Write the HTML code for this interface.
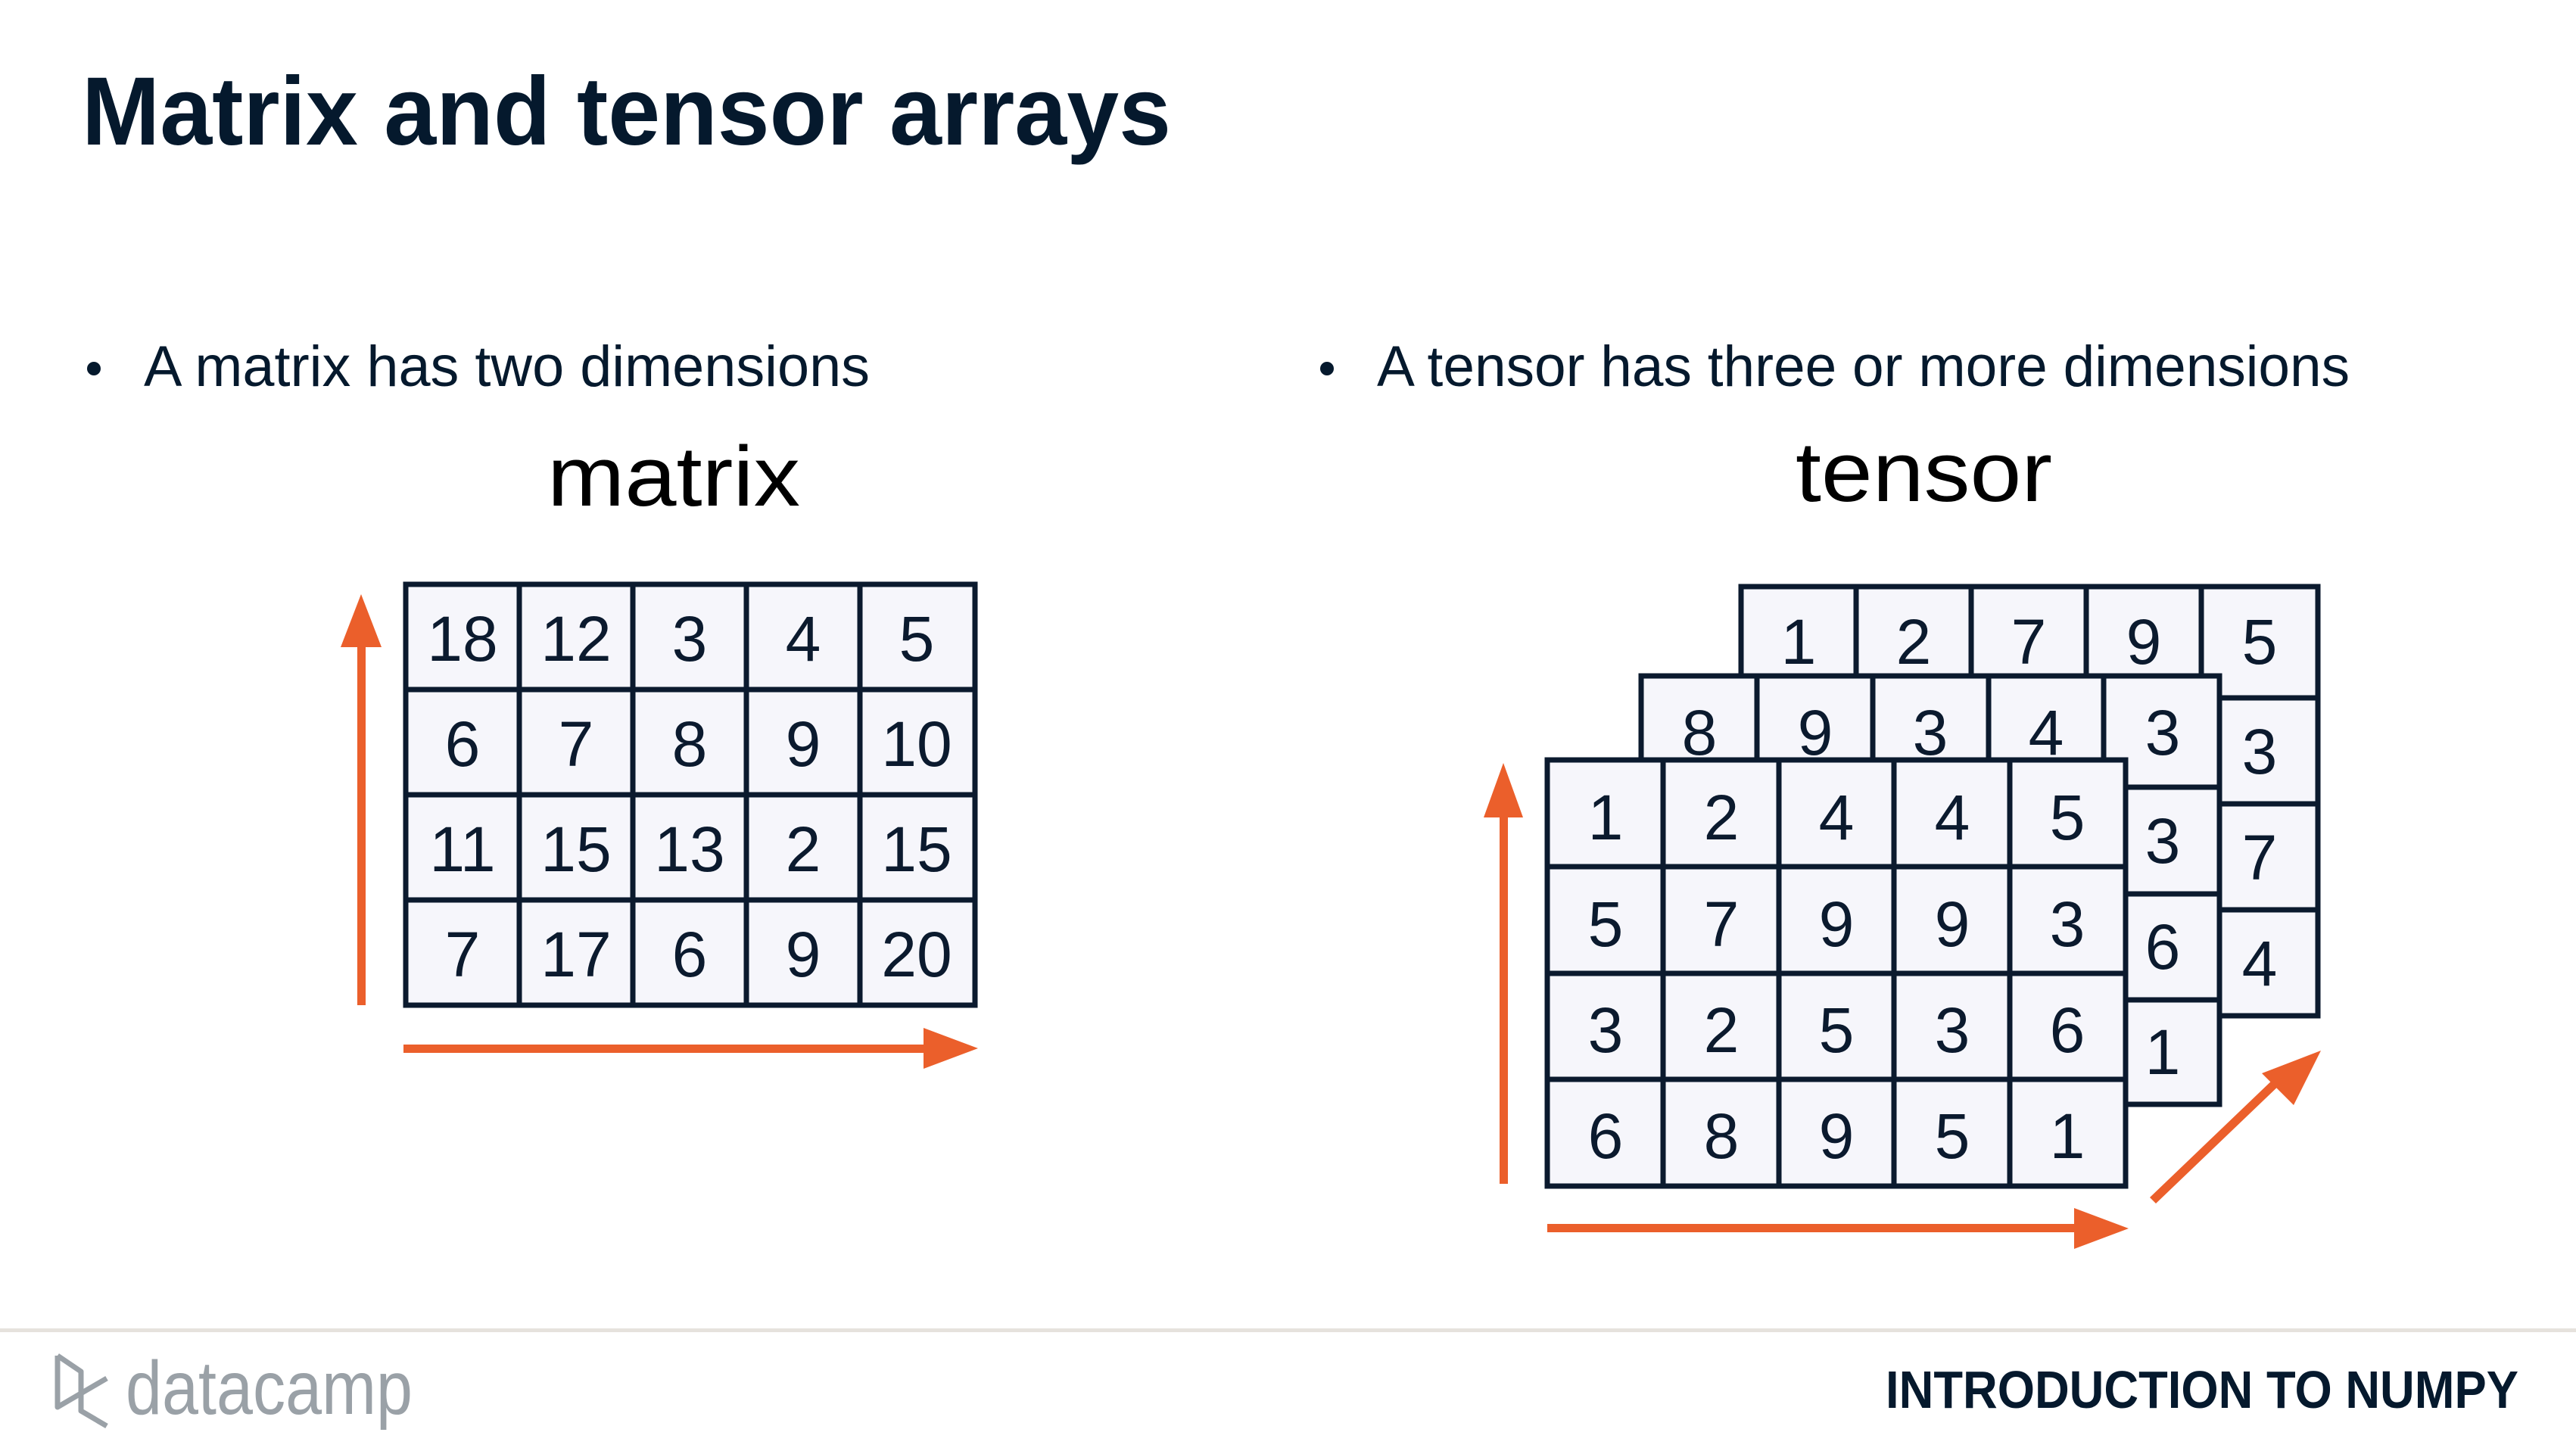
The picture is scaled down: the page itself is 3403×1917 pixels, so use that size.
<!DOCTYPE html>
<html><head><meta charset="utf-8"><style>
html,body{margin:0;padding:0;background:#fff;}
svg{display:block;}
</style></head><body>
<svg width="3403" height="1917" viewBox="0 0 3403 1917" xmlns="http://www.w3.org/2000/svg" font-family="'Liberation Sans', sans-serif">
<rect width="3403" height="1917" fill="#fff"/>
<text x="108" y="191" font-size="128" font-weight="bold" fill="#05192d" textLength="1439" lengthAdjust="spacingAndGlyphs">Matrix and tensor arrays</text>
<circle cx="124" cy="487" r="9" fill="#05192d"/>
<text x="190" y="510" font-size="76" fill="#05192d" textLength="959" lengthAdjust="spacingAndGlyphs">A matrix has two dimensions</text>
<circle cx="1753" cy="487" r="9" fill="#05192d"/>
<text x="1819" y="510" font-size="76" fill="#05192d" textLength="1285" lengthAdjust="spacingAndGlyphs">A tensor has three or more dimensions</text>
<text x="723" y="668" font-size="112" fill="#000" textLength="334" lengthAdjust="spacingAndGlyphs">matrix</text>
<text x="2372" y="662" font-size="112" fill="#000" textLength="339" lengthAdjust="spacingAndGlyphs">tensor</text>

<g fill="#f6f6fb" stroke="#0b1a2e" stroke-width="7">
<!-- matrix -->
<rect x="536" y="772" width="752" height="556"/>
<path d="M686 772V1328M836 772V1328M986 772V1328M1136 772V1328M536 911H1288M536 1050H1288M536 1189H1288" fill="none"/>
<!-- tensor back -->
<rect x="2300" y="775" width="762" height="567"/>
<path d="M2452 775V920M2604 775V920M2756 775V920M2908 775V920M2908 922H3062M2932 1062H3062M2932 1202H3062" fill="none"/>
<!-- middle -->
<rect x="2168" y="893" width="764" height="566"/>
<path d="M2321 893V1004M2474 893V1004M2627 893V1004M2779 893V1004M2808 1040H2932M2808 1181H2932M2808 1321H2932" fill="none"/>
<!-- front -->
<rect x="2044" y="1004" width="764" height="563"/>
<path d="M2197 1004V1567M2350 1004V1567M2502 1004V1567M2655 1004V1567M2044 1145H2808M2044 1286H2808M2044 1426H2808" fill="none"/>
</g>

<g font-size="84" fill="#0b1a2e" text-anchor="middle">
<text x="611" y="873">18</text><text x="761" y="873">12</text><text x="911" y="873">3</text><text x="1061" y="873">4</text><text x="1211" y="873">5</text>
<text x="611" y="1012">6</text><text x="761" y="1012">7</text><text x="911" y="1012">8</text><text x="1061" y="1012">9</text><text x="1211" y="1012">10</text>
<text x="611" y="1151">11</text><text x="761" y="1151">15</text><text x="911" y="1151">13</text><text x="1061" y="1151">2</text><text x="1211" y="1151">15</text>
<text x="611" y="1290">7</text><text x="761" y="1290">17</text><text x="911" y="1290">6</text><text x="1061" y="1290">9</text><text x="1211" y="1290">20</text>
<text x="2376" y="877">1</text><text x="2528" y="877">2</text><text x="2680" y="877">7</text><text x="2832" y="877">9</text><text x="2985" y="877">5</text>
<text x="2985" y="1022">3</text><text x="2985" y="1162">7</text><text x="2985" y="1302">4</text>
<text x="2245" y="997">8</text><text x="2398" y="997">9</text><text x="2550" y="997">3</text><text x="2703" y="997">4</text><text x="2857" y="997">3</text>
<text x="2857" y="1140">3</text><text x="2857" y="1280">6</text><text x="2857" y="1419">1</text>
<text x="2121" y="1109">1</text><text x="2274" y="1109">2</text><text x="2426" y="1109">4</text><text x="2579" y="1109">4</text><text x="2731" y="1109">5</text>
<text x="2121" y="1250">5</text><text x="2274" y="1250">7</text><text x="2426" y="1250">9</text><text x="2579" y="1250">9</text><text x="2731" y="1250">3</text>
<text x="2121" y="1390">3</text><text x="2274" y="1390">2</text><text x="2426" y="1390">5</text><text x="2579" y="1390">3</text><text x="2731" y="1390">6</text>
<text x="2121" y="1530">6</text><text x="2274" y="1530">8</text><text x="2426" y="1530">9</text><text x="2579" y="1530">5</text><text x="2731" y="1530">1</text>
</g>

<g fill="#eb5f2b" stroke="none">
<rect x="472" y="850" width="11" height="478"/>
<polygon points="477,785 450,855 504,855"/>
<rect x="533" y="1380" width="700" height="11"/>
<polygon points="1292,1385 1220,1358 1220,1412"/>
<rect x="1981" y="1070" width="11" height="494"/>
<polygon points="1986,1008 1960,1080 2012,1080"/>
<rect x="2044" y="1617" width="700" height="11"/>
<polygon points="2812,1623 2740,1596 2740,1650"/>
<polygon points="2840,1582 2848,1590 3015,1430 3007,1422"/>
<polygon points="3066,1388 2988,1418 3030,1460"/>
</g>

<rect x="0" y="1755" width="3403" height="5" fill="#e6e2dd"/>
<g fill="none" stroke="#9aa1a7" stroke-width="7" stroke-linejoin="round">
<path d="M76 1791V1859L141 1821M76 1791L107 1812V1864L141 1884"/>
</g>
<text x="166" y="1868" font-size="100" fill="#9aa1a7" textLength="379" lengthAdjust="spacingAndGlyphs">datacamp</text>
<text x="2491" y="1860" font-size="70" font-weight="bold" fill="#05192d" textLength="836" lengthAdjust="spacingAndGlyphs">INTRODUCTION TO NUMPY</text>
</svg>
</body></html>
